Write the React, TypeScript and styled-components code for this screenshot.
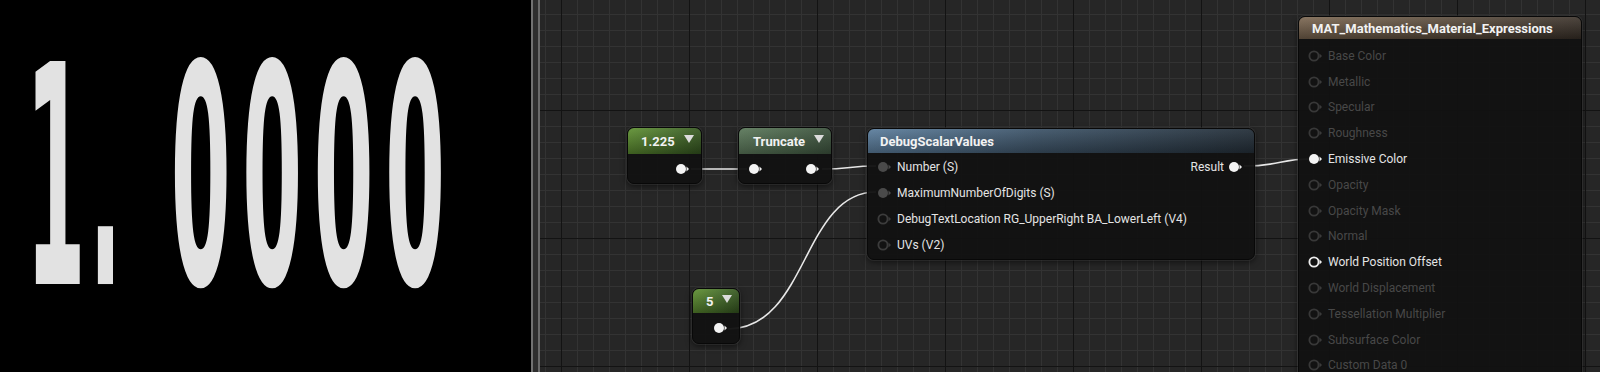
import styled, { createGlobalStyle } from "styled-components";

const GlobalStyle = createGlobalStyle`
  html, body {
    margin: 0;
    padding: 0;
    background: #000;
    overflow: hidden;
  }
  * { box-sizing: border-box; }
`;

const Page = styled.div`
  display: flex;
  width: 1600px;
  height: 372px;
  overflow: hidden;
`;

const Viewport = styled.div`
  width: 531px;
  flex: none;
  background: #000;
`;

// debug text is drawn stretched, like the engine's debug font
const Readout = styled.div`
  display: flex;
  align-items: flex-start;
  margin-top: 27px;
  padding-left: 30px;
  font-family: "DejaVu Sans", sans-serif;
  font-weight: 700;
  font-size: 100px;
  line-height: 100px;
  color: #e2e2e2;
  transform: scale(0.86, 3.06);
  transform-origin: 0 0;
  white-space: pre;
`;

const Glyph = styled.span<{ $shift: number; $track?: number }>`
  margin-left: ${(p) => p.$shift}px;
  letter-spacing: ${(p) => p.$track ?? 0}px;
`;

const Splitter = styled.div`
  width: 9px;
  flex: none;
  background: #2e2e2e;
  border-left: 2px solid #727272;
  border-right: 2px solid #6a6a6a;
`;

const Graph = styled.div`
  position: relative;
  flex: 1;
  height: 100%;
  overflow: hidden;
  background-color: #262626;
  background-image:
    linear-gradient(to right, #131313 1px, transparent 1px),
    linear-gradient(to bottom, #131313 1px, transparent 1px),
    linear-gradient(to right, #333 1px, transparent 1px),
    linear-gradient(to bottom, #333 1px, transparent 1px);
  background-size: 128px 128px, 128px 128px, 16px 16px, 16px 16px;
  background-position: 21px 110px, 21px 110px, 21px 110px, 21px 110px;
`;

const Wires = styled.svg`
  position: absolute;
  left: 0;
  top: 0;
  width: 100%;
  height: 100%;
  pointer-events: none;
`;

const Node = styled.div<{ $x: number; $y: number; $w: number }>`
  position: absolute;
  left: ${(p) => p.$x}px;
  top: ${(p) => p.$y}px;
  width: ${(p) => p.$w}px;
  border-radius: 7px;
  background: rgba(18, 18, 18, 0.96);
  border: 1px solid #080808;
  box-shadow: 0 0 0 1px rgba(90, 90, 90, 0.25), 0 2px 6px rgba(0, 0, 0, 0.6);
  font-family: Roboto, "Noto Sans", sans-serif;
  overflow: hidden;
`;

const headerColors = {
  constant:
    "linear-gradient(180deg, rgba(255,255,255,0.08) 0%, rgba(0,0,0,0.35) 100%), linear-gradient(90deg, #5f9131 0%, #47702a 60%, #365820 100%)",
  truncate:
    "linear-gradient(180deg, rgba(255,255,255,0.06) 0%, rgba(0,0,0,0.3) 100%), linear-gradient(90deg, #5d7a5c 0%, #4b654b 60%, #3d533e 100%)",
  debug:
    "linear-gradient(180deg, rgba(255,255,255,0.06) 0%, rgba(0,0,0,0.3) 100%), linear-gradient(90deg, #5d7f9e 0%, #3e5468 45%, #25303a 100%)",
  material:
    "linear-gradient(180deg, rgba(255,255,255,0.1) 0%, rgba(0,0,0,0.35) 100%), linear-gradient(90deg, #7b6650 0%, #5c4d3d 50%, #3a3129 100%)",
};

const Header = styled.div<{ $kind: keyof typeof headerColors; $h: number; $pad: number }>`
  display: flex;
  align-items: center;
  justify-content: space-between;
  height: ${(p) => p.$h}px;
  padding: 0 7px 0 ${(p) => p.$pad}px;
  background: ${(p) => headerColors[p.$kind]};
  color: #f2f2f2;
  font-size: 13px;
  font-weight: 700;
  white-space: nowrap;
`;

const Caret = styled.span`
  width: 0;
  height: 0;
  border-left: 5px solid transparent;
  border-right: 5px solid transparent;
  border-top: 8px solid #dcdcdc;
  margin-top: -4px;
`;

const PinRow = styled.div<{ $h: number; $justify?: string }>`
  display: flex;
  align-items: center;
  justify-content: ${(p) => p.$justify ?? "space-between"};
  height: ${(p) => p.$h}px;
  padding: 0 10px 0 9px;
`;

const Side = styled.div`
  display: flex;
  align-items: center;
  gap: 4px;
`;

const Label = styled.span<{ $dim?: boolean }>`
  font-size: 12px;
  color: ${(p) => (p.$dim ? "#484848" : "#e4e4e4")};
  white-space: nowrap;
`;

const Body = styled.div<{ $pad: string }>`
  padding: ${(p) => p.$pad};
`;

type PinKind = "white" | "gray" | "ring" | "dimRing" | "whiteRing";

const Pin = ({ kind }: { kind: PinKind }) => {
  const solid = kind === "white" || kind === "gray";
  const fill = kind === "white" ? "#f4f4f4" : kind === "gray" ? "#4a4a4a" : "none";
  const stroke =
    kind === "whiteRing" ? "#ececec" : kind === "ring" ? "#3c3c3c" : kind === "dimRing" ? "#383838" : "none";
  const arrow = kind === "white" || kind === "whiteRing" ? "#f0f0f0" : kind === "gray" ? "#4a4a4a" : "#3a3a3a";
  return (
    <svg width="16" height="12" viewBox="0 0 16 12">
      <circle cx="6" cy="6" r={solid ? 5 : 4.6} fill={fill} stroke={stroke} strokeWidth={solid ? 0 : 1.9} />
      <polygon points="11.5,3.6 14,6 11.5,8.4" fill={arrow} />
    </svg>
  );
};

const materialInputs: { label: string; pin: PinKind }[] = [
  { label: "Base Color", pin: "dimRing" },
  { label: "Metallic", pin: "dimRing" },
  { label: "Specular", pin: "dimRing" },
  { label: "Roughness", pin: "dimRing" },
  { label: "Emissive Color", pin: "white" },
  { label: "Opacity", pin: "dimRing" },
  { label: "Opacity Mask", pin: "dimRing" },
  { label: "Normal", pin: "dimRing" },
  { label: "World Position Offset", pin: "whiteRing" },
  { label: "World Displacement", pin: "dimRing" },
  { label: "Tessellation Multiplier", pin: "dimRing" },
  { label: "Subsurface Color", pin: "dimRing" },
  { label: "Custom Data 0", pin: "dimRing" },
];

const debugInputs: { label: string; pin: PinKind }[] = [
  { label: "Number (S)", pin: "gray" },
  { label: "MaximumNumberOfDigits (S)", pin: "gray" },
  { label: "DebugTextLocation RG_UpperRight BA_LowerLeft (V4)", pin: "ring" },
  { label: "UVs (V2)", pin: "ring" },
];

export default function App() {
  return (
    <Page>
      <GlobalStyle />
      <Viewport>
        <Readout>
          <Glyph $shift={0}>1</Glyph>
          <Glyph $shift={4}>.</Glyph>
          <Glyph $shift={57} $track={13.5}>0000</Glyph>
        </Readout>
      </Viewport>
      <Splitter />
      <Graph>
        <Wires>
          <g fill="none" stroke="#e8e8e8" strokeWidth="1.6">
            <path d="M151 169 L207 169" />
            <path d="M282 169 C 310 169, 310 166, 336 166" />
            <path d="M188 329 C 268 329, 262 192, 336 192" />
            <path d="M704 166 C 740 166, 740 159, 770 159" />
          </g>
        </Wires>

        <Node $x={87} $y={127} $w={75}>
          <Header $kind="constant" $h={26} $pad={13}>
            <span>1.225</span>
            <Caret />
          </Header>
          <PinRow $h={29} $justify="flex-end">
            <Pin kind="white" />
          </PinRow>
        </Node>

        <Node $x={198} $y={127} $w={94}>
          <Header $kind="truncate" $h={26} $pad={14}>
            <span>Truncate</span>
            <Caret />
          </Header>
          <PinRow $h={29}>
            <Pin kind="white" />
            <Pin kind="white" />
          </PinRow>
        </Node>

        <Node $x={152} $y={288} $w={48}>
          <Header $kind="constant" $h={24} $pad={13}>
            <span>5</span>
            <Caret />
          </Header>
          <PinRow $h={30} $justify="flex-end">
            <Pin kind="white" />
          </PinRow>
        </Node>

        <Node $x={327} $y={128} $w={388}>
          <Header $kind="debug" $h={24} $pad={12}>
            <span>DebugScalarValues</span>
          </Header>
          <Body $pad="1px 0 1px 0">
            {debugInputs.map((row, i) => (
              <PinRow key={row.label} $h={26}>
                <Side>
                  <Pin kind={row.pin} />
                  <Label>{row.label}</Label>
                </Side>
                {i === 0 && (
                  <Side>
                    <Label>Result</Label>
                    <Pin kind="white" />
                  </Side>
                )}
              </PinRow>
            ))}
          </Body>
        </Node>

        <Node $x={758} $y={16} $w={284}>
          <Header $kind="material" $h={22} $pad={13}>
            <span>MAT_Mathematics_Material_Expressions</span>
          </Header>
          <Body $pad="4px 0 20px 0">
            {materialInputs.map((row) => (
              <PinRow key={row.label} $h={25.8} $justify="flex-start">
                <Side>
                  <Pin kind={row.pin} />
                  <Label $dim={row.pin === "dimRing"}>{row.label}</Label>
                </Side>
              </PinRow>
            ))}
          </Body>
        </Node>
      </Graph>
    </Page>
  );
}
